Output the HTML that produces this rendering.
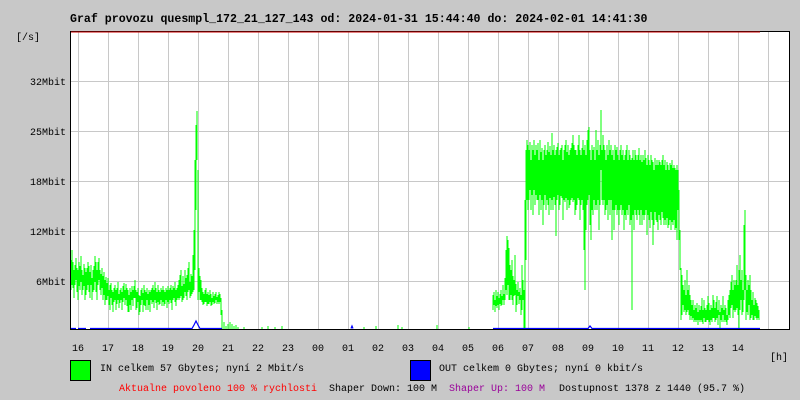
<!DOCTYPE html>
<html><head><meta charset="utf-8"><style>
html,body{margin:0;padding:0;background:#c8c8c8;width:800px;height:400px;overflow:hidden}
svg{display:block}
text{font-family:"Liberation Mono",monospace;font-size:10px}
</style></head><body>
<svg width="800" height="400" viewBox="0 0 800 400" xmlns="http://www.w3.org/2000/svg">
<rect width="800" height="400" fill="#c8c8c8"/>
<text x="70" y="22" font-weight="bold" style="font-size:11.6px" fill="#000">Graf provozu quesmpl_172_21_127_143 od: 2024-01-31 15:44:40 do: 2024-02-01 14:41:30</text>
<rect x="70" y="31" width="720" height="299" fill="#fff"/>
<g stroke="#c8c8c8" stroke-width="1" shape-rendering="crispEdges">
<path d="M78.5 31V330M108.5 31V330M138.5 31V330M168.5 31V330M198.5 31V330M228.5 31V330M258.5 31V330M288.5 31V330M318.5 31V330M348.5 31V330M378.5 31V330M408.5 31V330M438.5 31V330M468.5 31V330M498.5 31V330M528.5 31V330M558.5 31V330M588.5 31V330M618.5 31V330M648.5 31V330M678.5 31V330M708.5 31V330M738.5 31V330M768.5 31V330"/>
<path d="M70 81.5H790M70 131.5H790M70 181.5H790M70 231.5H790M70 281.5H790"/>
</g>
<g stroke="#00ff00" stroke-width="1" fill="none" shape-rendering="crispEdges">
<path d="M71 260V290M72 250V285M73 262V288M74 270V298M75 265V285M76 258V280M77 268V292M78 270V300M79 262V286M80 266V290M81 256V282M82 270V295M83 275V290M84 264V286M85 268V300M86 272V295M87 268V290M88 262V285M89 266V292M90 272V298M91 265V285M92 278V300M93 270V292M94 266V290M95 256V282M96 262V292M97 270V300M98 262V285M99 258V280M100 270V290M101 274V295M102 268V288M103 276V300M104 272V295M105 280V305M106 277V300M107 283V300M108 278V296M109 290V305M110 285V310M111 283V298M112 290V305M113 292V312M114 288V302M115 285V300M116 290V310M117 288V304M118 282V300M119 294V308M120 290V303M121 288V300M122 292V310M123 286V302M124 283V298M125 290V305M126 284V300M127 288V306M128 290V312M129 295V312M130 288V305M131 292V310M132 286V300M133 290V306M134 286V298M135 280V298M136 290V310M137 292V308M138 288V302M139 295V315M140 296V312M141 290V305M142 288V300M143 293V312M144 285V305M145 290V306M146 292V310M147 288V300M148 294V310M149 290V305M150 292V312M151 290V300M152 288V304M153 285V302M154 290V308M155 282V300M156 288V303M157 292V310M158 285V302M159 290V305M160 292V304M161 288V300M162 290V306M163 286V302M164 290V306M165 292V304M166 288V300M167 290V308M168 286V302M169 290V304M170 288V300M171 285V303M172 290V310M173 286V300M174 288V298M175 282V302M176 290V306M177 288V300M178 285V298M179 280V300M180 275V298M181 270V296M182 286V302M183 276V300M184 284V298M185 270V292M186 278V296M187 275V300M188 268V292M189 262V290M190 282V298M191 274V296M192 276V294M193 255V292M194 230V290M195 160V270M196 125V210M197 111V160M198 170V300M199 268V292M200 276V300M201 280V300M202 288V302M203 292V305M204 294V304M205 290V302M206 288V302M207 294V306M208 292V304M209 295V304M210 290V302M211 294V306M212 298V305M213 292V302M214 296V304M215 294V303M216 292V300M217 297V304M218 295V302M219 292V304M220 294V302M221 298V315M222 310V330M224 322V330M226 326V330M228 324V330M230 322V330M232 324V330M234 326V330M236 325V330M238 327V330M244 327V330M262 327V330M268 326V330M275 327V330M282 326V330M364 327V330M376 326V330M398 325V330M402 327V330M437 325V330M469 327V330"/>
<path d="M493 295V310M494 292V305M495 300V312M496 290V306M497 296V308M498 292V305M499 298V310M500 294V304M501 290V306M502 296V305M503 285V300M504 294V305M505 278V300M506 250V290M507 236V295M508 240V285M509 248V300M510 265V300M511 270V295M512 260V300M513 276V305M514 280V296M515 255V295M516 284V312M517 290V305M518 282V296M519 292V304M520 288V300M521 295V315M522 265V310M523 280V300M524 290V330M525 200V330M526 150V260M527 140V200M528 145V210M529 150V200M530 142V190M531 160V210M532 145V195M533 150V215M534 140V190M535 155V205M536 145V195M537 150V200M538 143V200M539 160V215M540 140V195M541 152V210M542 148V200M543 160V225M544 150V205M545 145V195M546 155V210M547 150V200M548 142V205M549 152V215M550 146V198M551 155V210M552 133V200M553 150V210M554 145V197M555 155V205M556 150V236M557 147V200M558 143V195M559 155V210M560 150V205M561 148V196M562 145V198M563 160V220M564 150V200M565 145V202M566 140V198M567 152V210M568 145V200M569 155V208M570 150V205M571 148V200M572 143V198M573 135V202M574 145V200M575 150V215M576 150V210M577 155V205M578 145V198M579 135V200M580 150V220M581 155V205M582 148V200M583 140V210M584 150V250M585 145V290M586 155V230M587 140V205M588 130V200M589 127V195M590 150V225M591 160V240M592 145V210M593 150V215M594 147V200M595 160V210M596 130V205M597 150V210M598 140V200M599 155V230M600 145V205M601 110V170M602 150V200M603 135V205M604 145V200M605 150V215M606 160V210M607 145V205M608 155V220M609 140V200M610 150V215M611 145V200M612 155V240M613 150V210M614 160V230M615 145V210M616 150V205M617 147V215M618 155V210M619 160V225M620 150V210M621 145V205M622 155V215M623 150V210M624 160V230M625 155V215M626 150V220M627 145V210M628 160V215M629 150V205M630 155V225M631 160V220M632 158V310M633 150V215M634 160V230M635 150V210M636 155V215M637 160V220M638 155V210M639 148V215M640 160V225M641 155V210M642 162V225M643 155V215M644 160V220M645 150V215M646 158V210M647 165V235M648 155V215M649 160V220M650 165V228M651 155V212M652 160V220M653 162V245M654 170V225M655 158V212M656 165V220M657 160V222M658 165V230M659 160V215M660 162V220M661 165V225M662 160V212M663 155V218M664 165V225M665 160V220M666 170V225M667 162V218M668 165V228M669 170V225M670 163V220M671 165V230M672 160V222M673 168V225M674 165V220M675 168V230M676 170V228M677 165V240M678 170V210M679 190V240M680 230V270M681 268V320M682 275V315M683 285V305M684 290V312M685 280V310M686 295V315M687 270V312M688 290V310M689 285V315M690 295V320M691 300V316M692 305V320M693 300V318M694 310V322M695 305V320M696 308V322M697 303V320M698 312V325M699 305V320M700 310V322M701 306V320M702 298V322M703 310V324M704 300V318M705 308V322M706 310V322M707 305V320M708 296V320M709 303V322M710 310V325M711 305V320M712 308V322M713 295V318M714 300V318M715 308V322M716 302V320M717 296V318M718 310V325M719 300V315M720 312V328M721 305V320M722 308V322M723 296V315M724 310V322M725 305V320M726 308V322M727 315V325M728 300V320M729 295V315M730 290V318M731 282V308M732 275V305M733 290V318M734 280V310M735 285V312M736 280V310M737 265V308M738 285V315M739 270V330M740 255V310M741 280V300M742 270V315M743 290V312M744 225V300M745 210V290M746 275V320M747 290V312M748 280V315M749 285V305M750 275V320M751 290V318M752 300V315M753 292V320M754 305V320M755 298V316M756 300V318M757 303V320M758 306V318M759 310V320"/>
</g>
<g stroke="#0000ff" stroke-width="1.2" fill="none">
<path d="M71 328.5H76M78 328.5H86M90 328.5H192L194 325L196 321L198 325L200 328.5H222"/>
<path d="M351 328.5L352 326L353 328.5M493 328.5H588L590 326L592 328.5H760"/>
</g>
<rect x="70.5" y="31.5" width="719" height="298" fill="none" stroke="#000" stroke-width="1"/>
<line x1="71" y1="32" x2="760" y2="32" stroke="#cc0000" stroke-width="1"/>
<g fill="#000">
<text x="16" y="40">[/s]</text>
<text x="66" y="85" text-anchor="end">32Mbit</text>
<text x="66" y="135" text-anchor="end">25Mbit</text>
<text x="66" y="185" text-anchor="end">18Mbit</text>
<text x="66" y="235" text-anchor="end">12Mbit</text>
<text x="66" y="285" text-anchor="end">6Mbit</text>
<text x="78" y="351" text-anchor="middle">16</text>
<text x="108" y="351" text-anchor="middle">17</text>
<text x="138" y="351" text-anchor="middle">18</text>
<text x="168" y="351" text-anchor="middle">19</text>
<text x="198" y="351" text-anchor="middle">20</text>
<text x="228" y="351" text-anchor="middle">21</text>
<text x="258" y="351" text-anchor="middle">22</text>
<text x="288" y="351" text-anchor="middle">23</text>
<text x="318" y="351" text-anchor="middle">00</text>
<text x="348" y="351" text-anchor="middle">01</text>
<text x="378" y="351" text-anchor="middle">02</text>
<text x="408" y="351" text-anchor="middle">03</text>
<text x="438" y="351" text-anchor="middle">04</text>
<text x="468" y="351" text-anchor="middle">05</text>
<text x="498" y="351" text-anchor="middle">06</text>
<text x="528" y="351" text-anchor="middle">07</text>
<text x="558" y="351" text-anchor="middle">08</text>
<text x="588" y="351" text-anchor="middle">09</text>
<text x="618" y="351" text-anchor="middle">10</text>
<text x="648" y="351" text-anchor="middle">11</text>
<text x="678" y="351" text-anchor="middle">12</text>
<text x="708" y="351" text-anchor="middle">13</text>
<text x="738" y="351" text-anchor="middle">14</text>
<text x="770" y="360">[h]</text>
<text x="100" y="371">IN celkem 57 Gbytes; nyní 2 Mbit/s</text>
<text x="439" y="371">OUT celkem 0 Gbytes; nyní 0 kbit/s</text>
<text x="119" y="391" fill="#ff0000">Aktualne povoleno 100 % rychlosti</text>
<text x="329" y="391">Shaper Down: 100 M</text>
<text x="449" y="391" fill="#990099">Shaper Up: 100 M</text>
<text x="559" y="391">Dostupnost 1378 z 1440 (95.7 %)</text>
</g>
<rect x="70.5" y="360.5" width="20" height="20" fill="#00ff00" stroke="#000"/>
<rect x="410.5" y="360.5" width="20" height="20" fill="#0000ff" stroke="#000"/>
</svg>
</body></html>
